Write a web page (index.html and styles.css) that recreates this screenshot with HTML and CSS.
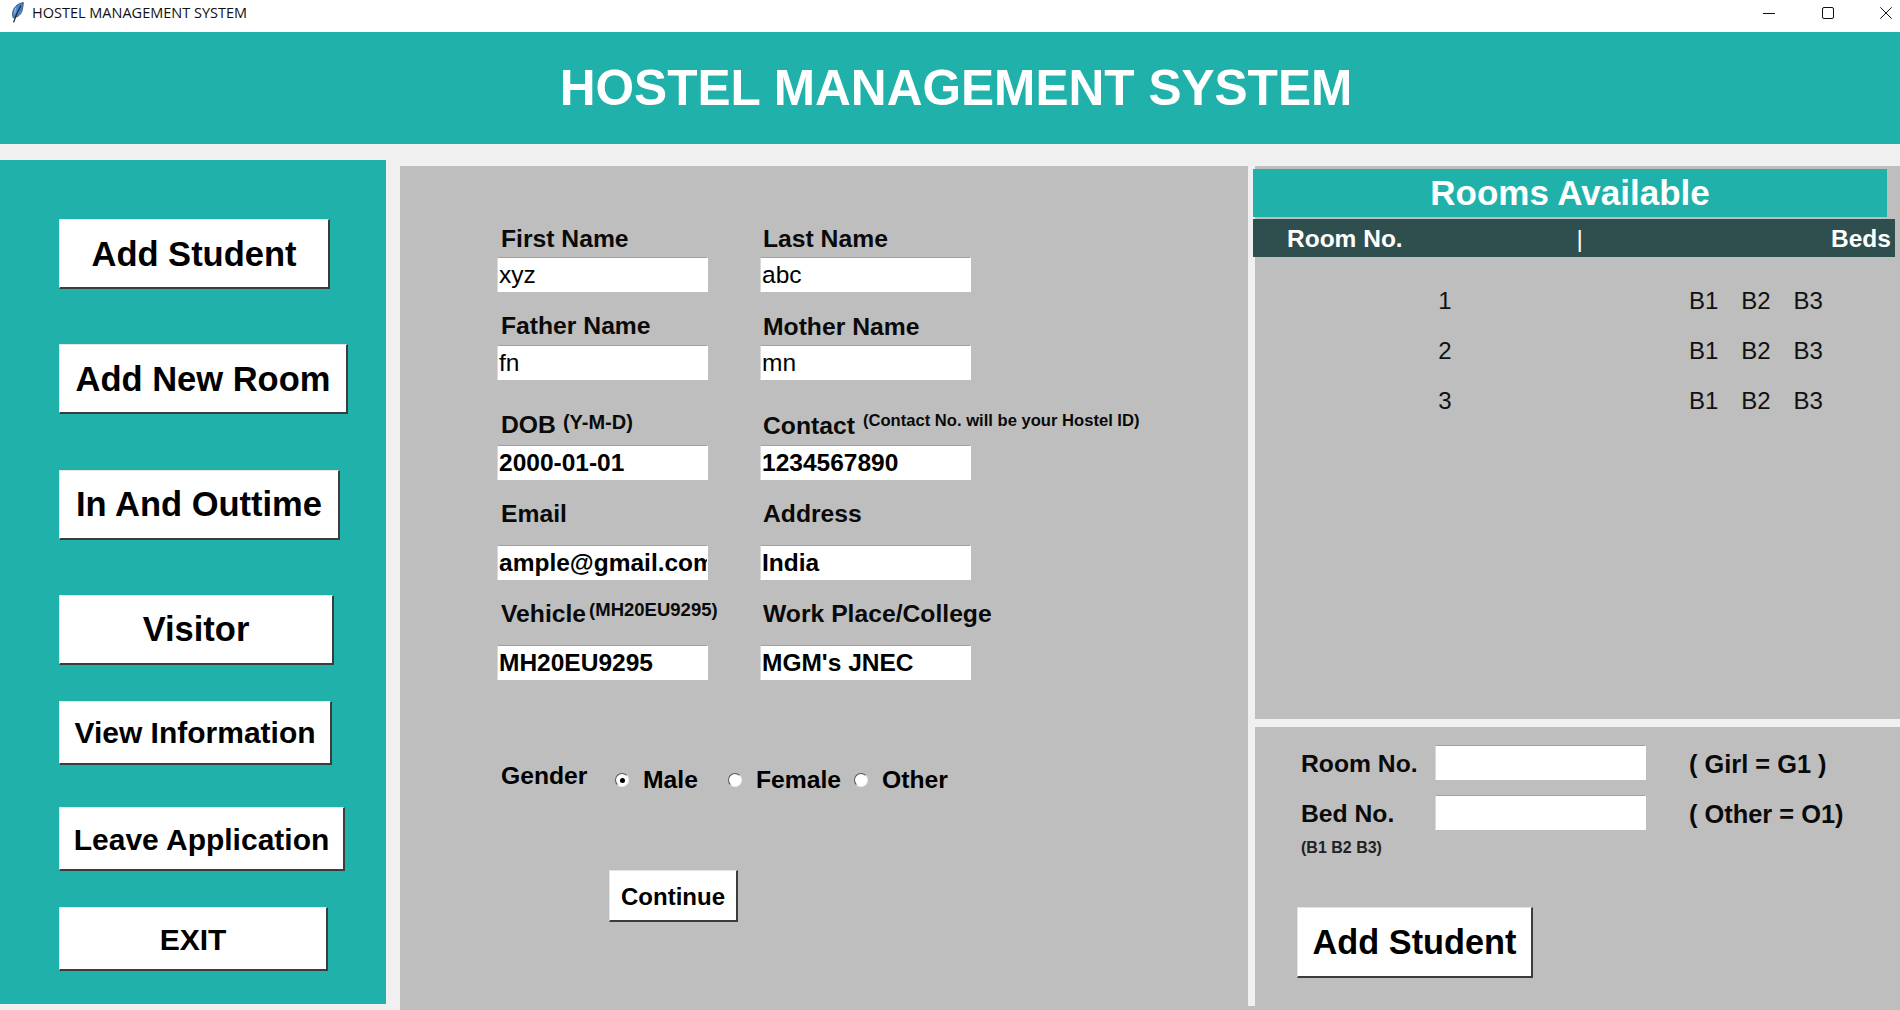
FILE: index.html
```html
<!DOCTYPE html>
<html lang="en">
<head>
<meta charset="utf-8">
<title>HOSTEL MANAGEMENT SYSTEM</title>
<link rel="stylesheet" href="styles.css">
</head>
<body>
<div class="titlebar">
  <svg class="feather" viewBox="0 0 13 21" aria-hidden="true">
    <path d="M12.4 .6C7.4 1.2 3 4.6 1.8 9.6c-.5 2.4-.3 4.6 .5 6.4l4.4-1.6c2.2-1.2 3.6-3.2 4.4-5.6C11.6 6.2 12.3 3.4 12.4 .6z" fill="#4a86d2" stroke="#3a4a60" stroke-width=".8"/>
    <path d="M5 5.5C4.2 7.5 3.8 9.5 3.8 11.5" fill="none" stroke="#a9c8ee" stroke-width="1"/>
    <path d="M10 3.5C7.4 8 4.6 13.5 2.6 20.4" fill="none" stroke="#23272e" stroke-width="1.3"/>
  </svg>
  <span class="titlebar-text">HOSTEL MANAGEMENT SYSTEM</span>
  <div class="window-controls">
    <svg class="wc" viewBox="0 0 12 12" aria-hidden="true"><path d="M0 6.5H12" stroke="#111" stroke-width="1" fill="none"/></svg>
    <svg class="wc" viewBox="0 0 12 12" aria-hidden="true"><rect x=".5" y=".5" width="11" height="11" rx="1.5" stroke="#111" stroke-width="1" fill="none"/></svg>
    <svg class="wc" viewBox="0 0 12 12" aria-hidden="true"><path d="M.3 .3L11.7 11.7M11.7 .3L.3 11.7" stroke="#111" stroke-width="1" fill="none"/></svg>
  </div>
</div>

<header class="banner">HOSTEL MANAGEMENT SYSTEM</header>

<div class="main">
  <nav class="sidebar">
    <button class="btn nav-btn nav-1">Add Student</button>
    <button class="btn nav-btn nav-2">Add New Room</button>
    <button class="btn nav-btn nav-3 flush">In And Outtime</button>
    <button class="btn nav-btn nav-4 flush">Visitor</button>
    <button class="btn nav-btn nav-sm nav-5 flush">View Information</button>
    <button class="btn nav-btn nav-sm nav-6">Leave Application</button>
    <button class="btn nav-btn nav-sm nav-7">EXIT</button>
  </nav>

  <div class="panel">
    <section class="form">
      <div class="form-grid">
        <div class="field tight"><div class="lbl">First Name</div><div class="input">xyz</div></div>
        <div class="field tight col2"><div class="lbl">Last Name</div><div class="input">abc</div></div>
        <div class="field mid-b"><div class="lbl">Father Name</div><div class="input">fn</div></div>
        <div class="field tight col2"><div class="lbl">Mother Name</div><div class="input">mn</div></div>
        <div class="field mid-a"><div class="lbl lbl-hinted"><span>DOB</span><small class="hint hint-dob">(Y-M-D)</small></div><div class="input strong">2000-01-01</div></div>
        <div class="field mid-b col2"><div class="lbl lbl-hinted"><span>Contact</span><small class="hint hint-contact">(Contact No. will be your Hostel ID)</small></div><div class="input strong">1234567890</div></div>
        <div class="field loose"><div class="lbl">Email</div><div class="input strong">ample@gmail.com</div></div>
        <div class="field loose col2"><div class="lbl">Address</div><div class="input strong">India</div></div>
        <div class="field loose"><div class="lbl lbl-hinted"><span>Vehicle</span><small class="hint hint-vehicle">(MH20EU9295)</small></div><div class="input strong">MH20EU9295</div></div>
        <div class="field loose col2"><div class="lbl">Work Place/College</div><div class="input strong">MGM's JNEC</div></div>
      </div>

      <div class="gender">
        <span class="gender-label">Gender</span>
        <span class="radio checked"></span><span class="opt-text text-male">Male</span>
        <span class="radio"></span><span class="opt-text text-female">Female</span>
        <span class="radio"></span><span class="opt-text">Other</span>
      </div>

      <button class="btn continue">Continue</button>
    </section>

    <div class="vline"></div>

    <section class="right">
      <div class="rooms">
        <div class="rooms-title">Rooms Available</div>
        <div class="rooms-head"><span>Room No.</span><span class="sep">|</span><span>Beds</span></div>
        <div class="rooms-list">
          <div class="room-row"><span class="room-no">1</span><span class="bed">B1</span><span class="bed">B2</span><span class="bed">B3</span></div>
          <div class="room-row"><span class="room-no">2</span><span class="bed">B1</span><span class="bed">B2</span><span class="bed">B3</span></div>
          <div class="room-row"><span class="room-no">3</span><span class="bed">B1</span><span class="bed">B2</span><span class="bed">B3</span></div>
        </div>
      </div>
      <div class="hline"></div>
      <div class="assign">
        <div class="assign-row"><span class="lbl">Room No.</span><div class="input"></div><span class="lbl note">( Girl = G1 )</span></div>
        <div class="assign-row"><span class="lbl">Bed No.</span><div class="input"></div><span class="lbl note">( Other = O1)</span></div>
        <div class="bed-hint">(B1 B2 B3)</div>
        <button class="btn add-student">Add Student</button>
      </div>
    </section>
  </div>
</div>
</body>
</html>
```
FILE: styles.css
```css
* { box-sizing: border-box; }
html, body { margin: 0; height: 100%; }
body {
  width: 1900px;
  height: 1010px;
  overflow: hidden;
  background: #f0f0f0;
  color: #000;
  font-family: "Liberation Sans", Arial, sans-serif;
  display: flex;
  flex-direction: column;
}

/* window chrome */
.titlebar {
  height: 32px;
  flex: none;
  background: #fff;
  display: flex;
  align-items: center;
  padding: 0 0 7px 11px;
}
.feather { width: 13px; height: 21px; flex: none; }
.titlebar-text {
  margin-left: 8px;
  font-family: "Open Sans", sans-serif;
  font-size: 14.5px;
  color: #111;
  white-space: nowrap;
}
.window-controls {
  margin-left: auto;
  display: flex;
  gap: 46.5px;
  padding-right: 8px;
  align-items: center;
}
.wc { width: 12px; height: 12px; display: block; }

.banner {
  height: 112px;
  flex: none;
  background: #20b2aa;
  color: #fff;
  font-size: 49.6px;
  font-weight: 700;
  display: flex;
  align-items: center;
  justify-content: center;
  padding-left: 12px;
}

.main {
  flex: 1;
  min-height: 0;
  display: flex;
  padding-top: 16px;
}

/* sidebar */
.sidebar {
  width: 386px;
  height: 844px;
  flex: none;
  background: #20b2aa;
  display: flex;
  flex-direction: column;
  align-items: flex-start;
  padding: 59px 0 0 59px;
}
.btn {
  display: block;
  margin: 0;
  padding: 2px 0 0;
  background: #fff;
  color: #000;
  font-family: inherit;
  font-weight: 700;
  text-align: center;
  border-style: solid;
  border-width: 1px 2px 2px 1px;
  border-color: #e4e4e4 #3c3c3c #3c3c3c #e4e4e4;
  border-radius: 0;
}
.btn.flush { padding-top: 0; }
.nav-btn { height: 70px; font-size: 34.5px; }
.nav-sm { height: 64px; font-size: 30px; }
.nav-1 { width: 271px; }
.nav-2 { width: 289px; margin-top: 55px; }
.nav-3 { width: 281px; margin-top: 56px; }
.nav-4 { width: 275px; margin-top: 55px; }
.nav-5 { width: 273px; margin-top: 36px; }
.nav-6 { width: 286px; margin-top: 42px; }
.nav-7 { width: 269px; margin-top: 36px; }

/* main gray panel */
.panel {
  margin: 6px 0 0 14px;
  width: 1500px;
  height: 844px;
  background: #bebebe;
  display: flex;
}
.form {
  width: 848px;
  flex: none;
  padding: 58px 0 0 97px;
}
.form-grid {
  display: grid;
  grid-template-columns: 263px 263px;
  grid-template-rows: 68px 88px 100px 100px 100px;
}
.field {
  display: flex;
  flex-direction: column;
  justify-content: flex-end;
}
.field .lbl { padding-left: 4px; height: 28px; white-space: nowrap; }
.field.col2 .lbl { padding-left: 3px; }
.tight .lbl { margin-bottom: 4px; }
.mid-a .lbl { margin-bottom: 6px; }
.mid-b .lbl { margin-bottom: 5px; }
.loose .lbl { margin-bottom: 17px; }
.lbl {
  font-size: 24.7px;
  font-weight: 700;
  line-height: 28px;
  color: #0a0a0a;
}
.lbl-hinted { display: flex; align-items: flex-start; }
.hint { font-weight: 700; }
.hint-dob { font-size: 20px; line-height: 23px; margin-left: 7px; }
.hint-contact { font-size: 16.6px; line-height: 18px; margin-left: 8px; }
.hint-vehicle { font-size: 18.5px; line-height: 20px; margin-left: 3px; }
.input {
  width: 211px;
  height: 35px;
  background: #fff;
  border-style: solid;
  border-width: 1px;
  border-color: #a0a0a0 #fff #fff #d8d8d8;
  font-size: 24.5px;
  line-height: 33px;
  padding-left: 1px;
  overflow: hidden;
  white-space: nowrap;
}
.strong { font-weight: 700; }

.gender {
  margin: 86px 0 0 4px;
  display: flex;
  align-items: center;
  height: 28px;
  font-size: 24.7px;
  font-weight: 700;
}
.gender-label { width: 114px; margin-top: -8px; }
.radio {
  width: 14px;
  height: 14px;
  flex: none;
  border-radius: 50%;
  background: #fff;
  border: 1.5px solid #555;
  border-right-color: #eee;
  border-bottom-color: #eee;
  display: flex;
  align-items: center;
  justify-content: center;
}
.checked::after {
  content: "";
  width: 5px;
  height: 5px;
  border-radius: 50%;
  background: #000;
}
.opt-text { margin-left: 14px; }
.text-male { width: 85px; }
.text-female { width: 98px; }

.continue {
  width: 129px;
  height: 52px;
  margin: 76px 0 0 112px;
  font-size: 24px;
}

.vline {
  width: 7px;
  height: 840px;
  flex: none;
  background: #f0f0f0;
}

/* right column */
.right {
  flex: 1;
  min-width: 0;
  display: flex;
  flex-direction: column;
}
.rooms { height: 553px; padding-top: 3px; }
.rooms-title {
  width: 634px;
  height: 48px;
  margin-left: -2px;
  background: #20b2aa;
  color: #fff;
  font-size: 35px;
  font-weight: 700;
  line-height: 48px;
  text-align: center;
}
.rooms-head {
  width: 642px;
  height: 38px;
  margin: 2px 0 0 -2px;
  background: #2f4f4f;
  color: #fff;
  font-size: 24.5px;
  font-weight: 700;
  display: grid;
  grid-template-columns: 289.5px 254.5px auto;
  align-items: center;
  padding: 1px 0 0 34px;
  white-space: nowrap;
}
.sep { font-weight: 400; }
.rooms-list { padding-top: 19px; }
.room-row {
  height: 50px;
  display: flex;
  align-items: center;
  font-size: 24px;
  color: #111;
}
.room-no { width: 380px; text-align: center; margin-right: 54px; }
.bed { width: 52.3px; }

.hline { height: 8px; background: #f0f0f0; flex: none; }
.assign { padding: 18px 0 0 46px; flex: 1; }
.assign-row {
  display: grid;
  grid-template-columns: 134px 211px auto;
  align-items: center;
  height: 35px;
  margin-bottom: 15px;
}
.assign-row .lbl { padding-top: 2px; }
.note { margin-left: 43px; font-size: 25.4px; white-space: nowrap; }
.bed-hint {
  font-size: 16px;
  font-weight: 700;
  line-height: 18px;
  margin-top: -6px;
  color: #222;
}
.add-student {
  width: 236px;
  height: 71px;
  margin: 50px 0 0 -4px;
  padding-top: 0;
  font-size: 34.3px;
}
```
